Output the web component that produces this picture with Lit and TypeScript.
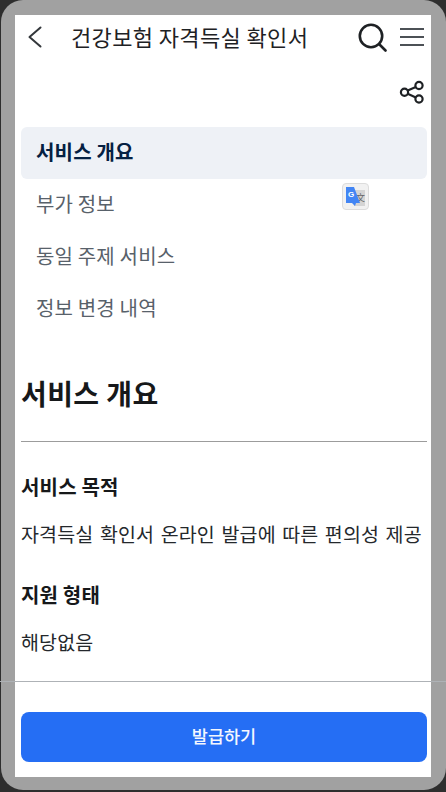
import { LitElement, html, css } from "lit";
import { customElement } from "lit/decorators.js";

@customElement("app-root")
export class AppRoot extends LitElement {
  static styles = css`
    :host {
      display: block;
      width: 446px;
      height: 792px;
      background: #2e2e2e;
      font-family: "Noto Sans CJK KR", "Noto Sans", sans-serif;
      overflow: hidden;
    }
    .frame {
      position: relative;
      box-sizing: border-box;
      width: 445px;
      height: 790px;
      margin-left: 1px;
      padding: 15px 14px 13px 14px;
      background: #a1a1a1;
      border-radius: 22px;
      display: flex;
    }
    .panel {
      flex: 1;
      background: #fff;
      display: flex;
      flex-direction: column;
      padding: 0 4px 0 6px;
      margin-right: 1px;
      min-width: 0;
    }
    .rule {
      position: absolute;
      left: -1px;
      right: -1px;
      top: 681px;
      height: 1px;
      background: #aeb2b6;
    }
    header {
      height: 44px;
      display: flex;
      align-items: center;
      color: #1e2124;
    }
    .back {
      width: 44px;
      padding-left: 6px;
      display: flex;
      flex: none;
    }
    h1 {
      flex: 1;
      margin: 0 0 1px;
      font-size: 22px;
      letter-spacing: 0.37px;
      font-weight: 400;
      line-height: 43px;
      white-space: nowrap;
    }
    .tools {
      display: flex;
      align-items: center;
      gap: 12px;
      margin-right: 2px;
    }
    svg {
      display: block;
    }
    .share-row {
      height: 66px;
      padding-right: 2px;
      display: flex;
      justify-content: flex-end;
      align-items: center;
    }
    nav {
      margin-top: 2px;
      display: flex;
      flex-direction: column;
    }
    .item {
      height: 52px;
      box-sizing: border-box;
      padding: 0 0 4px 15px;
      display: flex;
      align-items: center;
      font-size: 20px;
      letter-spacing: 0.17px;
      color: #58616a;
      border-radius: 6px;
    }
    .item.active {
      background: #eef1f6;
      color: #052042;
      font-weight: 700;
    }
    .translate {
      position: absolute;
      left: 341px;
      top: 183px;
      width: 27px;
      height: 27px;
      box-sizing: border-box;
      border: 1px solid #dcdcdc;
      border-radius: 4px;
      background: #f1f1f1;
    }
    h2 {
      margin: 38px 0 0;
      font-size: 28px;
      letter-spacing: 0.4px;
      line-height: 40px;
      font-weight: 700;
      color: #16181a;
    }
    .divider {
      height: 1px;
      background: #9c9c9c;
      margin-top: 28px;
    }
    h3 {
      margin: 26px 0 0;
      font-size: 20px;
      letter-spacing: 0.17px;
      line-height: 36px;
      font-weight: 700;
      color: #16181a;
    }
    .divider + h3 {
      margin-top: 27px;
    }
    p {
      margin: 11px 0 0;
      font-size: 19.5px;
      word-spacing: 1.9px;
      letter-spacing: 0.17px;
      line-height: 35px;
      color: #24282c;
      white-space: nowrap;
    }
    .spacer {
      flex: 1;
    }
    .cta {
      height: 50px;
      box-sizing: border-box;
      padding-bottom: 3px;
      margin-bottom: 15px;
      border-radius: 8px;
      background: #256ef4;
      color: #f4f7ff;
      font-size: 17.5px;
      font-weight: 500;
      display: flex;
      align-items: center;
      justify-content: center;
    }
  `;

  render() {
    return html`
      <div class="frame">
        <div class="panel">
          <header>
            <span class="back">
              <svg width="16" height="22" viewBox="0 0 16 22" fill="none" stroke="#33373b" stroke-width="2" stroke-linecap="round" stroke-linejoin="round">
                <path d="M13.5 1.5 L2.5 11 L13.5 20.5" />
              </svg>
            </span>
            <h1>건강보험 자격득실 확인서</h1>
            <div class="tools">
              <svg width="29" height="29" viewBox="0 0 29 29" fill="none" stroke="#1e2124" stroke-width="2.6" stroke-linecap="round">
                <circle cx="13" cy="13" r="11.2" />
                <path d="M21.5 21.5 L27.5 27.5" />
              </svg>
              <svg width="26" height="22" viewBox="0 0 26 22" fill="none" stroke="#4c5156" stroke-width="2">
                <path d="M1 3 H25 M1 11 H25 M1 19 H25" />
              </svg>
            </div>
          </header>
          <div class="share-row">
            <svg width="26" height="26" viewBox="0 0 26 26" fill="none" stroke="#1e2124" stroke-width="2.2">
              <circle cx="20" cy="6.5" r="3.6" />
              <circle cx="20" cy="20" r="3.6" />
              <circle cx="5.5" cy="13.2" r="3.6" />
              <path d="M8.7 11.6 L16.8 8 M8.7 14.8 L16.8 18.5" />
            </svg>
          </div>
          <nav>
            <div class="item active">서비스 개요</div>
            <div class="item">부가 정보</div>
            <div class="item">동일 주제 서비스</div>
            <div class="item">정보 변경 내역</div>
          </nav>
          <h2>서비스 개요</h2>
          <div class="divider"></div>
          <h3>서비스 목적</h3>
          <p>자격득실 확인서 온라인 발급에 따른 편의성 제공</p>
          <h3>지원 형태</h3>
          <p>해당없음</p>
          <div class="spacer"></div>
          <div class="cta">발급하기</div>
        </div>
        <div class="rule"></div>
        <div class="translate">
          <svg width="25" height="25" viewBox="0 0 25 25">
            <rect x="11" y="6" width="11" height="16" fill="#d4d4d4" />
            <text x="13" y="17" font-size="9" fill="#666" font-family="Noto Sans CJK SC">文</text>
            <path d="M3 3 H11 L17 19 H13 L12 22 L9 19 H3 Z" fill="#4285f4" />
            <text x="5" y="13" font-size="8" font-weight="700" fill="#fff" font-family="Liberation Sans">G</text>
          </svg>
        </div>
      </div>
    `;
  }
}
